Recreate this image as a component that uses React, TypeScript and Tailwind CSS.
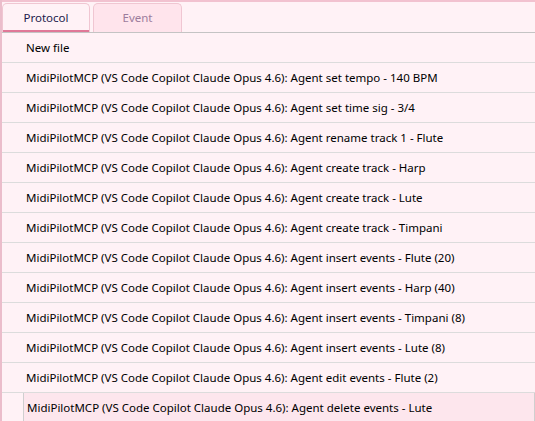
import React from "react";

const entries = [
  "New file",
  "MidiPilotMCP (VS Code Copilot Claude Opus 4.6): Agent set tempo - 140 BPM",
  "MidiPilotMCP (VS Code Copilot Claude Opus 4.6): Agent set time sig - 3/4",
  "MidiPilotMCP (VS Code Copilot Claude Opus 4.6): Agent rename track 1 - Flute",
  "MidiPilotMCP (VS Code Copilot Claude Opus 4.6): Agent create track - Harp",
  "MidiPilotMCP (VS Code Copilot Claude Opus 4.6): Agent create track - Lute",
  "MidiPilotMCP (VS Code Copilot Claude Opus 4.6): Agent create track - Timpani",
  "MidiPilotMCP (VS Code Copilot Claude Opus 4.6): Agent insert events - Flute (20)",
  "MidiPilotMCP (VS Code Copilot Claude Opus 4.6): Agent insert events - Harp (40)",
  "MidiPilotMCP (VS Code Copilot Claude Opus 4.6): Agent insert events - Timpani (8)",
  "MidiPilotMCP (VS Code Copilot Claude Opus 4.6): Agent insert events - Lute (8)",
  "MidiPilotMCP (VS Code Copilot Claude Opus 4.6): Agent edit events - Flute (2)",
  "MidiPilotMCP (VS Code Copilot Claude Opus 4.6): Agent delete events - Lute",
];

export default function App() {
  const selected = entries.length - 1;
  return (
    <div className="w-[535px] h-[421px] overflow-hidden bg-[#fff2f6] border-l-2 border-[#ebbdcb] font-['Noto_Sans',sans-serif] text-[11.5px] text-black">
      <div className="h-[2px] bg-[#f2c2d0]" />
      {/* tab bar */}
      <div className="flex items-end gap-[3px] h-[30px] pt-px">
        <div className="relative w-[88px] h-[29px] rounded-t-[5px] border border-b-0 border-[#f0c6d2] bg-[#fff2f6] flex items-center justify-center text-[#1c1a4c]">
          Protocol
          <div className="absolute left-0 right-0 bottom-0 h-[2px] bg-[#e07898]" />
        </div>
        <div className="w-[89px] h-[29px] rounded-t-[5px] border border-b-0 border-[#f0c6d2] bg-[#ffe4ec] flex items-center justify-center text-[#9c7c9c]">
          Event
        </div>
      </div>
      {/* history list */}
      <div className="border-t border-[#c4c4c4]">
        {entries.map((e, i) =>
          i === selected ? (
            <div key={i} className="h-[30px] pl-[21px]">
              <div className="h-full flex items-center pl-[3px] border-l border-r border-[#cfcfcf] bg-[#fde6ed] whitespace-nowrap">
                {e}
              </div>
            </div>
          ) : (
            <div key={i} className="h-[30px] flex items-center pl-[24px] border-b border-[#dcdcdc] whitespace-nowrap">
              {e}
            </div>
          )
        )}
      </div>
    </div>
  );
}
